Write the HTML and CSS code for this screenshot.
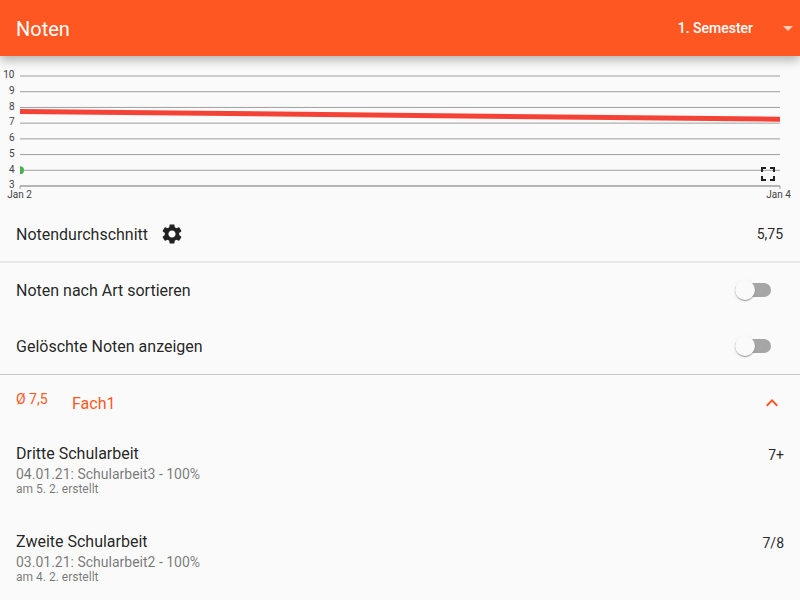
FILE: index.html
```html
<!DOCTYPE html>
<html lang="de">
<head>
<meta charset="utf-8">
<title>Noten</title>
<link rel="stylesheet" href="styles.css">
</head>
<body>
<header class="appbar">
  <h1 class="appbar-title">Noten</h1>
  <div class="semester">
    <span>1. Semester</span>
    <svg class="semester-arrow" width="24" height="24" viewBox="0 0 24 24"><path d="M7 10l5 5 5-5z"/></svg>
  </div>
</header>
<main>
  <section class="chart">
    <svg width="800" height="150" viewBox="0 56 800 150">
      <g class="grid">
        <path d="M20 76H780M20 91.71H780M20 107.43H780M20 123.14H780M20 138.86H780M20 154.57H780M20 170.29H780M20 186H780"/>
        <path class="axis" d="M20 186H780M20 186V189M780 186V189"/>
      </g>
      <path class="average-line" d="M20 111.4L780 119.2"/>
      <path class="point" d="M20 166.2a4 4 0 0 1 0 8z"/>
      <g class="y-labels">
        <text x="14.5" y="78">10</text>
        <text x="14.5" y="94">9</text>
        <text x="14.5" y="110">8</text>
        <text x="14.5" y="125">7</text>
        <text x="14.5" y="141">6</text>
        <text x="14.5" y="157">5</text>
        <text x="14.5" y="173">4</text>
        <text x="14.5" y="188">3</text>
      </g>
      <g class="x-labels">
        <text x="19.5" y="198">Jan 2</text>
        <text x="778.5" y="198">Jan 4</text>
      </g>
      <path class="fullscreen" transform="translate(756 162)" d="M7 14H5v5h5v-2H7v-3zm-2-4h2V7h3V5H5v5zm12 7h-3v2h5v-5h-2v3zM14 5v2h3v3h2V5h-5z"/>
    </svg>
  </section>
  <section class="row average">
    <span class="row-title">Notendurchschnitt</span>
    <svg class="gear" width="24" height="24" viewBox="0 0 24 24"><path d="M19.14 12.94c.04-.3.06-.61.06-.94 0-.32-.02-.64-.07-.94l2.03-1.58c.18-.14.23-.41.12-.61l-1.92-3.32c-.12-.22-.37-.29-.59-.22l-2.39.96c-.5-.38-1.03-.7-1.62-.94l-.36-2.54c-.04-.24-.24-.41-.48-.41h-3.84c-.24 0-.43.17-.47.41l-.36 2.54c-.59.24-1.13.57-1.62.94l-2.39-.96c-.22-.08-.47 0-.59.22L2.74 8.87c-.12.21-.08.47.12.61l2.03 1.58c-.05.3-.09.63-.09.94s.02.64.07.94l-2.03 1.58c-.18.14-.23.41-.12.61l1.92 3.32c.12.22.37.29.59.22l2.39-.96c.5.38 1.03.7 1.62.94l.36 2.54c.05.24.24.41.48.41h3.84c.24 0 .44-.17.47-.41l.36-2.54c.59-.24 1.13-.56 1.62-.94l2.39.96c.22.08.47 0 .59-.22l1.92-3.32c.12-.22.07-.47-.12-.61l-2.01-1.58zM12 15.6c-1.98 0-3.6-1.62-3.6-3.6s1.62-3.6 3.6-3.6 3.6 1.62 3.6 3.6-1.62 3.6-3.6 3.6z"/></svg>
    <span class="value">5,75</span>
  </section>
  <section class="row">
    <span class="row-title">Noten nach Art sortieren</span>
    <span class="switch"><span class="thumb"></span></span>
  </section>
  <section class="row">
    <span class="row-title">Gelöschte Noten anzeigen</span>
    <span class="switch"><span class="thumb"></span></span>
  </section>
  <section class="subject">
    <div class="subject-header">
      <span class="subject-average">Ø 7,5</span>
      <span class="subject-name">Fach1</span>
      <svg class="chevron" width="24" height="24" viewBox="0 0 24 24"><path d="M12 8l-6 6 1.41 1.41L12 10.83l4.59 4.58L18 14z"/></svg>
    </div>
    <article class="grade">
      <div>
        <div class="grade-title">Dritte Schularbeit</div>
        <div class="grade-detail">04.01.21: Schularbeit3 - 100%</div>
        <div class="grade-created">am 5. 2. erstellt</div>
      </div>
      <span class="value">7+</span>
    </article>
    <article class="grade">
      <div>
        <div class="grade-title">Zweite Schularbeit</div>
        <div class="grade-detail">03.01.21: Schularbeit2 - 100%</div>
        <div class="grade-created">am 4. 2. erstellt</div>
      </div>
      <span class="value">7/8</span>
    </article>
  </section>
</main>
</body>
</html>
```
FILE: styles.css
```css
* { box-sizing: border-box; }
body {
  margin: 0;
  height: 600px;
  overflow: hidden;
  background: #fafafa;
  color: rgba(0, 0, 0, .87);
  font-family: Roboto, sans-serif;
}
svg { display: block; flex: none; }
.appbar {
  position: relative;
  display: flex;
  align-items: center;
  justify-content: space-between;
  height: 56px;
  padding: 0 0 0 16px;
  background: #ff5722;
  color: #fff;
  box-shadow: 0 4px 10px rgba(0, 0, 0, .3);
}
.appbar-title {
  margin: 2px 0 0;
  font-size: 20px;
  font-weight: 400;
  line-height: 24px;
}
.semester {
  display: flex;
  align-items: center;
  gap: 23px;
  font-size: 14px;
  font-weight: 500;
}
.semester-arrow { fill: rgba(255, 255, 255, .7); }
.chart { height: 150px; }
.grid { fill: none; stroke: #9e9e9e; stroke-width: 1; }
.average-line { fill: none; stroke: #f44336; stroke-width: 5; }
.point { fill: #4caf50; }
.y-labels, .x-labels { font-size: 10px; fill: #424242; }
.y-labels { text-anchor: end; }
.x-labels { text-anchor: middle; }
.fullscreen { fill: #212121; }
.row {
  display: flex;
  align-items: center;
  height: 56px;
  padding: 0 16px;
}
.average {
  background: linear-gradient(#e8e8e8, #e8e8e8) 0 55px / 100% 1px no-repeat;
  box-shadow: 0 1px #e8e8e8;
}
.row-title { margin-top: 1px; font-size: 16px; line-height: 24px; }
.gear { margin-left: 12px; fill: #212121; }
.value { margin-left: auto; font-size: 14px; line-height: 20px; }
.average .value { margin-right: 1px; }
.switch {
  position: relative;
  width: 36px;
  height: 14px;
  margin: 0 13px 0 auto;
  border-radius: 7px;
  background: #a6a6a6;
}
.thumb {
  position: absolute;
  left: 0;
  top: -3px;
  width: 20px;
  height: 20px;
  border-radius: 50%;
  background: #fafafa;
  box-shadow: 0 2px 1px -1px rgba(0, 0, 0, .2), 0 1px 1px rgba(0, 0, 0, .14), 0 1px 3px rgba(0, 0, 0, .12);
}
.subject { border-top: 1px solid #c8c8c8; }
.subject-header {
  display: flex;
  align-items: center;
  height: 56px;
  padding: 0 16px;
  color: #ff5722;
}
.subject-average { width: 56px; margin-top: -8px; font-size: 14px; }
.subject-name { font-size: 16px; }
.chevron { margin-left: auto; fill: #ff5722; }
.grade {
  display: flex;
  align-items: flex-start;
  height: 88px;
  padding: 12px 16px 0;
}
.grade-title { font-size: 16px; line-height: 21px; }
.grade-detail { font-size: 14px; line-height: 20px; color: rgba(0, 0, 0, .54); }
.grade-created { font-size: 12px; line-height: 10px; color: rgba(0, 0, 0, .54); }
.grade .value { margin-top: 2px; }
```
